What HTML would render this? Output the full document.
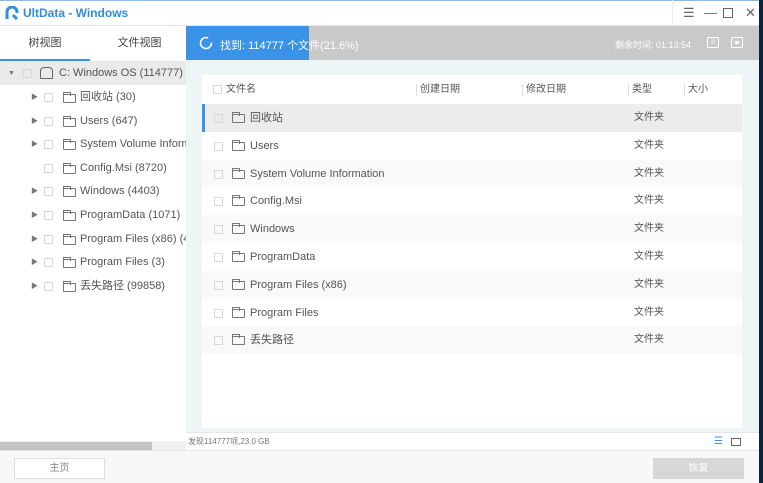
<!DOCTYPE html>
<html><head><meta charset="utf-8"><style>
*{margin:0;padding:0;box-sizing:border-box}
body{width:763px;height:483px;overflow:hidden;background:#fff;font-family:"Liberation Sans","Noto Sans CJK SC",sans-serif;position:relative;color:#555}
.abs{position:absolute}
.title{left:0;top:0;width:760px;height:26px;background:#fff;border-top:1px solid #8fb8e0;border-bottom:1px solid #e4e4e4}
.rb{left:759px;top:0;width:4px;height:483px;background:#0d2440}
.left{left:0;top:26px;width:186px;height:424px;background:#fff}
.tab{top:26px;height:34px;line-height:34px;font-size:11px;color:#444;text-align:center}
.tree{left:0;font-size:11px;color:#555;height:23px;line-height:23px;white-space:nowrap;width:186px;overflow:hidden}
.cb{display:inline-block;width:9px;height:9px;border:1px solid #d8d8d8;vertical-align:middle}
.fold{position:absolute;width:13px;height:9px;border:1px solid #777;border-radius:1px}
.fold:before{content:"";position:absolute;left:-1px;top:-3px;width:6px;height:3px;border:1px solid #777;border-bottom:none}
.tri{position:absolute;font-size:7px;color:#777}
.hdr{left:186px;top:26px;width:573px;height:34px;background:#c9c9c9}
.prog{left:186px;top:26px;width:123px;height:34px;background:#3a93e6}
.main{left:186px;top:60px;width:573px;height:372px;background:#eef5f7}
.panel{left:202px;top:75px;width:540px;height:353px;background:#fff}
.row{left:202px;width:540px;height:28px;line-height:28px;font-size:11px;color:#555}
.stat{left:186px;top:432px;width:573px;height:18px;background:#fff;border-top:1px solid #e6e6e6;font-size:8px;color:#777;line-height:18px}
.bot{left:0;top:450px;width:759px;height:33px;background:#f8f8f8;border-top:1px solid #e6e6e6}
</style></head><body>
<div class="abs title"></div>
<svg class="abs" style="left:5px;top:6px" width="14" height="14" viewBox="0 0 14 14"><path d="M2 13V6a5 5 0 0 1 10 0v1" stroke="#2f8de4" stroke-width="3" fill="none"/><path d="M8 9l4 4" stroke="#2f8de4" stroke-width="3"/></svg>
<div class="abs" style="left:23px;top:6px;font-size:12px;font-weight:bold;color:#2f8de4">UltData - Windows</div>
<div class="abs" style="left:672px;top:0;width:88px;height:26px;border-left:1px solid #eee;font-size:13px;color:#666;line-height:26px">
<span class="abs" style="left:10px">☰</span><span class="abs" style="left:31px">—</span><span class="abs" style="left:50px;top:8px;width:10px;height:10px;border:1px solid #666"></span><span class="abs" style="left:72px">✕</span></div>
<div class="abs rb"></div>
<div class="abs left"></div>
<div class="abs tab" style="left:0;width:90px">树视图</div>
<div class="abs tab" style="left:93px;width:93px">文件视图</div>
<div class="abs" style="left:0;top:59px;width:90px;height:2px;background:#3a93e6"></div>
<div class="abs" style="left:0;top:61px;width:186px;height:24px;background:#eaeaea"></div>
<div class="abs tree" style="top:62px"><span class="tri" style="left:8px">▼</span><span class="cb abs" style="left:23px;top:7px"></span><span class="abs" style="left:40px;top:5px;width:13px;height:12px;border:1px solid #666;border-radius:4px 4px 1px 1px"></span><span class="abs" style="left:59px">C: Windows OS (114777)</span></div>
<div id="tr"></div>
<div class="abs hdr"></div>
<div class="abs prog"></div>
<svg class="abs" style="left:199px;top:36px" width="14" height="14"><circle cx="7" cy="7" r="5.5" stroke="#fff" stroke-width="1.6" fill="none" stroke-dasharray="28 6"/></svg>
<div class="abs" style="left:220px;top:37px;font-size:11px;color:#fff">找到: 114777 个文件(21.6%)</div>
<div class="abs" style="left:615px;top:38px;font-size:9px;color:#fff">剩余时间: 01:13:54</div>
<div class="abs" style="left:707px;top:37px;width:12px;height:11px;border:1px solid #fff;color:#fff;font-size:7px;text-align:center;line-height:9px">II</div>
<div class="abs" style="left:731px;top:37px;width:12px;height:11px;border:1px solid #fff"><div style="margin:3px;width:4px;height:3px;background:#fff"></div></div>
<div class="abs main"></div>
<div class="abs panel"></div>
<div class="abs row" style="top:76px;font-size:10px">
<span class="cb abs" style="left:11px;top:9px"></span><span class="abs" style="left:24px">文件名</span>
<span class="abs" style="left:214px;top:8px;height:12px;border-left:1px solid #ddd"></span><span class="abs" style="left:218px">创建日期</span>
<span class="abs" style="left:320px;top:8px;height:12px;border-left:1px solid #ddd"></span><span class="abs" style="left:324px">修改日期</span>
<span class="abs" style="left:426px;top:8px;height:12px;border-left:1px solid #ddd"></span><span class="abs" style="left:430px">类型</span>
<span class="abs" style="left:482px;top:8px;height:12px;border-left:1px solid #ddd"></span><span class="abs" style="left:486px">大小</span></div>
<div id="rows"></div>
<div class="abs stat"><span style="margin-left:2px">发现114777项,23.0 GB</span>
<span class="abs" style="left:528px;top:0;color:#3a93e6;font-size:10px">☰</span><span class="abs" style="left:545px;top:5px;width:10px;height:8px;border:1px solid #666"></span></div>
<div class="abs" style="left:0;top:441px;width:186px;height:9px;background:#f0f0f0"></div>
<div class="abs" style="left:0;top:442px;width:152px;height:8px;background:#c3c3c3"></div>
<div class="abs bot"></div>
<div class="abs" style="left:14px;top:458px;width:91px;height:21px;border:1px solid #ddd;background:#fff;font-size:10px;color:#888;text-align:center;line-height:19px">主页</div>
<div class="abs" style="left:653px;top:458px;width:91px;height:21px;background:#d7d7d7;font-size:10px;color:#fff;text-align:center;line-height:21px">恢复</div>
<script>
var t=[["回收站 (30)",1],["Users (647)",1],["System Volume Inform",1],["Config.Msi (8720)",0],["Windows (4403)",1],["ProgramData (1071)",1],["Program Files (x86) (43",1],["Program Files (3)",1],["丢失路径 (99858)",1]],h="";
t.forEach(function(e,i){var y=86+i*23.6;h+='<div class="abs tree" style="top:'+y+'px">'+(e[1]?'<span class="tri" style="left:31px">▶</span>':'')+'<span class="cb abs" style="left:44px;top:7px"></span><span class="fold" style="left:63px;top:8px"></span><span class="abs" style="left:80px">'+e[0]+'</span></div>'});
document.getElementById('tr').innerHTML=h;
var r=["回收站","Users","System Volume Information","Config.Msi","Windows","ProgramData","Program Files (x86)","Program Files","丢失路径"];h="";
r.forEach(function(n,i){var y=104+i*27.8;var bg=i==0?'#ececec':(i%2==0?'#f9f9f9':'#fff');h+='<div class="abs row" style="top:'+y+'px;background:'+bg+'">'+(i==0?'<span class="abs" style="left:0;top:0;width:3px;height:28px;background:#3a93e6"></span>':'')+'<span class="cb abs" style="left:12px;top:10px"></span><span class="fold" style="left:30px;top:10px"></span><span class="abs" style="left:48px">'+n+'</span><span class="abs" style="left:432px;font-size:10px">文件夹</span></div>'});
document.getElementById('rows').innerHTML=h;
</script>
</body></html>
